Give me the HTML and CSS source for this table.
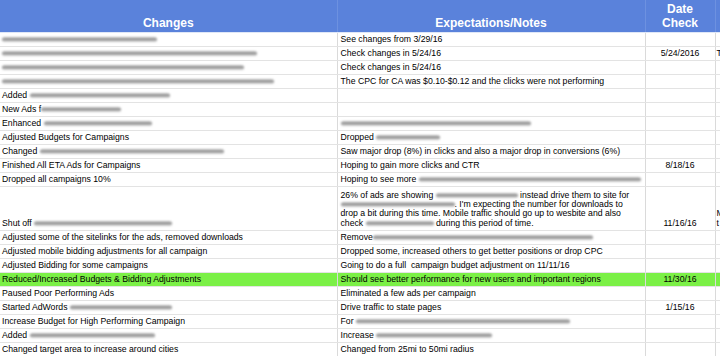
FILE: index.html
```html
<!DOCTYPE html>
<html>
<head>
<meta charset="utf-8">
<link rel="stylesheet" href="styles.css">
</head>
<body>
<table class="sheet">
  <colgroup>
    <col class="c-changes">
    <col class="c-notes">
    <col class="c-date">
    <col class="c-extra">
  </colgroup>
  <thead>
    <tr class="head">
      <th>Changes</th>
      <th>Expectations/Notes</th>
      <th>Date<br>Check</th>
      <th></th>
    </tr>
  </thead>
  <tbody>
    <tr><td><span class="blur" style="width:155px"></span></td><td>See changes from 3/29/16</td><td></td><td></td></tr>
    <tr><td><span class="blur" style="width:255px"></span></td><td>Check changes in 5/24/16</td><td class="date">5/24/2016</td><td class="extra">T</td></tr>
    <tr><td><span class="blur" style="width:242px"></span></td><td>Check changes in 5/24/16</td><td></td><td></td></tr>
    <tr><td><span class="blur" style="width:272px"></span></td><td>The CPC for CA was $0.10-$0.12 and the clicks were not performing</td><td></td><td></td></tr>
    <tr><td>Added <span class="blur" style="width:140px"></span></td><td></td><td></td><td></td></tr>
    <tr><td>New Ads f<span class="blur" style="width:80px"></span></td><td></td><td></td><td></td></tr>
    <tr><td>Enhanced <span class="blur" style="width:108px"></span></td><td><span class="blur" style="width:190px"></span></td><td></td><td></td></tr>
    <tr><td>Adjusted Budgets for Campaigns</td><td>Dropped <span class="blur" style="width:64px"></span></td><td></td><td></td></tr>
    <tr><td>Changed <span class="blur" style="width:184px"></span></td><td>Saw major drop (8%) in clicks and also a major drop in conversions (6%)</td><td></td><td></td></tr>
    <tr><td>Finished All ETA Ads for Campaigns</td><td>Hoping to gain more clicks and CTR</td><td class="date">8/18/16</td><td></td></tr>
    <tr><td>Dropped all campaigns 10%</td><td>Hoping to see more <span class="blur" style="width:222px"></span></td><td></td><td></td></tr>
    <tr class="tall">
      <td>Shut off <span class="blur" style="width:138px"></span></td>
      <td>26% of ads are showing <span class="blur" style="width:82px"></span> instead drive them to site for<br><span class="blur" style="width:114px"></span>. I'm expecting the number for downloads to<br>drop a bit during this time. Mobile traffic should go up to wesbite and also<br>check <span class="blur" style="width:68px"></span> during this period of time.</td>
      <td class="date">11/16/16</td>
      <td class="extra">M<br>t</td>
    </tr>
    <tr><td>Adjusted some of the sitelinks for the ads, removed downloads</td><td>Remove<span class="blur" style="width:220px"></span></td><td></td><td></td></tr>
    <tr><td>Adjusted mobile bidding adjustments for all campaign</td><td>Dropped some, increased others to get better positions or drop CPC</td><td></td><td></td></tr>
    <tr><td>Adjusted Bidding for some campaigns</td><td>Going to do a full&nbsp; campaign budget adjustment on 11/11/16</td><td></td><td></td></tr>
    <tr class="hl"><td>Reduced/Increased Budgets &amp; Bidding Adjustments</td><td>Should see better performance for new users and important regions</td><td class="date">11/30/16</td><td></td></tr>
    <tr><td>Paused Poor Performing Ads</td><td>Eliminated a few ads per campaign</td><td></td><td></td></tr>
    <tr><td>Started AdWords <span class="blur" style="width:102px"></span></td><td>Drive traffic to state pages</td><td class="date">1/15/16</td><td></td></tr>
    <tr><td>Increase Budget for High Performing Campaign</td><td>For <span class="blur" style="width:214px"></span></td><td></td><td></td></tr>
    <tr><td>Added <span class="blur" style="width:125px"></span></td><td>Increase <span class="blur" style="width:116px"></span></td><td></td><td></td></tr>
    <tr><td>Changed target area to increase around cities</td><td>Changed from 25mi to 50mi radius</td><td></td><td></td></tr>
  </tbody>
</table>
</body>
</html>
```
FILE: styles.css
```css
html, body {
  margin: 0;
  padding: 0;
  background: #ffffff;
  overflow: hidden;
}
.sheet {
  border-collapse: collapse;
  table-layout: fixed;
  width: 760px;
  font-family: "Liberation Sans", Arial, sans-serif;
  font-size: 8.7px;
  color: #000000;
}
.c-changes { width: 337px; }
.c-notes { width: 308px; }
.c-date { width: 70px; }
.c-extra { width: 45px; }

.head th {
  height: 30px;
  background: #5a82db;
  color: #ffffff;
  font-size: 12px;
  font-weight: bold;
  line-height: 14px;
  vertical-align: bottom;
  text-align: center;
  padding: 0 0 2px 0;
  border-right: 1px solid #6d91e0;
  border-bottom: 1px solid #dfe7f7;
}
tbody tr { height: 14px; }
tbody td {
  padding: 0 3px 2px 3px;
  line-height: 9.3px;
  vertical-align: bottom;
  white-space: nowrap;
  overflow: hidden;
  border-bottom: 1px solid #e3e3e3;
  border-right: 1px solid #dadada;
}
tbody td:first-child { padding-left: 2px; }
tbody td.extra { padding-left: 1px; }
tbody tr.tall { height: 44px; }
tbody td.date { text-align: center; }
tbody tr.hl td { background: #7bf046; }

.blur {
  display: inline-block;
  height: 5px;
  vertical-align: 0;
  border-radius: 3px;
  background: linear-gradient(180deg, #d4d4d4 0%, #8a8a8a 40%, #a8a8a8 65%, #e0e0e0 100%);
  filter: blur(0.9px);
}
```
